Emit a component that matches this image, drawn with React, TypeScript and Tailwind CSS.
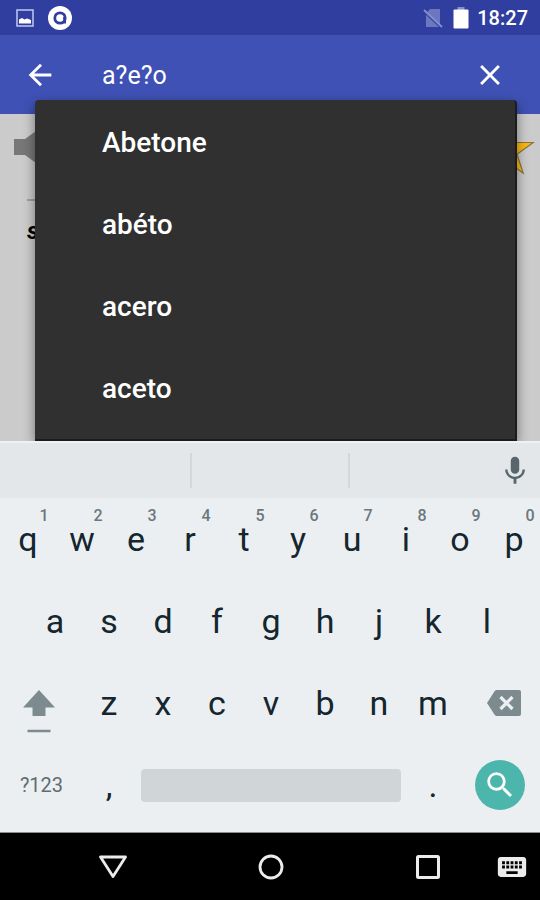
import { useState } from "react";
import type { ReactNode } from "react";
import { MdArrowBack, MdClose, MdKeyboard, MdMic, MdSearch } from "react-icons/md";

const WORDS = ["Abetone", "abéto", "acero", "aceto"];
const TOP_ROW = ["q", "w", "e", "r", "t", "y", "u", "i", "o", "p"];
const DIGITS = ["1", "2", "3", "4", "5", "6", "7", "8", "9", "0"];
const HOME_ROW = ["a", "s", "d", "f", "g", "h", "j", "k", "l"];
const BOTTOM_ROW = ["z", "x", "c", "v", "b", "n", "m"];

function StatusBar() {
  return (
    <div className="h-[35px] bg-[#303f9f] pl-4 pr-3 flex items-center text-white">
      <svg width="18" height="18" viewBox="0 0 18 18" aria-hidden="true">
        <rect x="1" y="1" width="16" height="16" fill="none" stroke="#b9c1ea" strokeWidth="1.6" />
        <path d="M3 14.500v-4l3-1.500 2.500 1.500 2.500-1 4 1.500v3.500z" fill="#fff" />
      </svg>
      <svg width="24" height="24" viewBox="0 0 24 24" className="ml-3.5" aria-hidden="true">
        <circle cx="12" cy="12" r="12" fill="#fff" />
        <circle cx="12" cy="12" r="5.200" fill="none" stroke="#303f9f" strokeWidth="2.800" />
        <path d="M16.600 11v6.500" stroke="#303f9f" strokeWidth="2.800" />
      </svg>
      <div className="flex-1" />
      <svg width="20" height="20" viewBox="0 0 20 20" aria-hidden="true">
        <path d="M7 1h10v18H3V5.500z" fill="#6b78c0" />
        <path d="M1 3.500l17 16" stroke="#303f9f" strokeWidth="2" />
        <path d="M1 2l18 17" stroke="#8490cc" strokeWidth="1.800" />
      </svg>
      <svg width="16" height="22" viewBox="0 0 16 22" className="ml-2.5" aria-hidden="true">
        <path d="M4.500 0h7v3h-7z" fill="#8490cc" />
        <rect x="0.500" y="2.500" width="15" height="19" rx="1" fill="#fff" />
      </svg>
      <time className="ml-2 text-[20px] leading-6 font-medium">18:27</time>
    </div>
  );
}

function Key({ label, digit }: { label: string; digit?: string }) {
  return (
    <button className="relative flex-1 h-full pl-0.5 flex items-center justify-center text-[34px] leading-10 text-[#14262e]">
      {label}
      {digit && (
        <span className="absolute top-2 right-1 w-3 text-center text-[16px] leading-5 font-medium text-[#6b777c]">{digit}</span>
      )}
    </button>
  );
}

function Row({ children, className = "" }: { children: ReactNode; className?: string }) {
  return <div className={`h-[82px] flex items-center ${className}`}>{children}</div>;
}

function Keyboard() {
  return (
    <div className="bg-[#eceff1]">
      <div className="h-[57px] bg-[#e4e7e9] border-t-2 border-[#eff1f2] flex items-center">
        <div className="w-[35.5%] h-[35px] border-r-2 border-[#d3d7d9]" />
        <div className="w-[29.3%] h-[35px] border-r-2 border-[#d3d7d9]" />
        <div className="flex-1 flex justify-end pr-2">
          <button aria-label="Voice input">
            <MdMic size={34} className="text-[#58666b]" />
          </button>
        </div>
      </div>
      <Row>
        {TOP_ROW.map((k, i) => (
          <Key key={k} label={k} digit={DIGITS[i]} />
        ))}
      </Row>
      <Row className="px-[5%]">
        {HOME_ROW.map((k) => (
          <Key key={k} label={k} />
        ))}
      </Row>
      <Row>
        <button aria-label="Shift" className="w-[15%] h-full pr-1 pt-4 flex items-center justify-center">
          <svg width="34" height="44" viewBox="0 0 34 44">
            <path d="M17 1l16 17.500H23.500V27h-13V18.500H1z" fill="#7d8b8f" />
            <path d="M5.500 42h23" stroke="#7d8b8f" strokeWidth="2.500" />
          </svg>
        </button>
        {BOTTOM_ROW.map((k) => (
          <Key key={k} label={k} />
        ))}
        <button aria-label="Backspace" className="w-[15%] h-full pl-2 flex items-center justify-center">
          <svg width="34" height="26" viewBox="0 0 34 26">
            <path d="M10 0h22q2 0 2 2v22q0 2-2 2H10q-1.500 0-2.400-1.300L0 13 7.600 1.300Q8.500 0 10 0z" fill="#7d8b8f" />
            <path d="M13.500 7l12 12M25.500 7l-12 12" stroke="#eceff1" strokeWidth="3.200" />
          </svg>
        </button>
      </Row>
      <Row>
        <button className="w-[15%] h-full pl-0.5 text-[20px] leading-6 text-[#5f6d72]">?123</button>
        <div className="w-[10%] h-full flex">
          <Key label="," />
        </div>
        <div className="flex-1 pl-1.5 pr-1">
          <button aria-label="Space" className="block w-full h-[33px] rounded bg-[#d0d5d8]" />
        </div>
        <div className="w-[10%] h-full flex">
          <Key label="." />
        </div>
        <div className="w-[15%] flex justify-center">
          <button aria-label="Search" className="size-[50px] rounded-full bg-[#4db6ac] text-white flex items-center justify-center">
            <MdSearch size={34} />
          </button>
        </div>
      </Row>
      <div className="h-[7px] border-b border-[#8a8d8e]" />
    </div>
  );
}

function NavBar() {
  return (
    <nav className="h-[67px] bg-black flex items-center text-[#ececec]">
      <div className="flex-1 ml-[81px] mr-6 flex justify-between">
        <button aria-label="Back" className="w-16 h-12 flex items-center justify-center">
          <svg width="30" height="26" viewBox="0 0 30 26" fill="none" stroke="currentColor" strokeWidth="2.800">
            <path d="M2.500 3h25L15 22.500z" strokeLinejoin="round" />
          </svg>
        </button>
        <button aria-label="Home" className="w-16 h-12 flex items-center justify-center">
          <svg width="26" height="26" viewBox="0 0 26 26" fill="none" stroke="currentColor" strokeWidth="2.800">
            <circle cx="13" cy="13" r="11" />
          </svg>
        </button>
        <button aria-label="Recent apps" className="w-16 h-12 flex items-center justify-center">
          <svg width="24" height="24" viewBox="0 0 24 24" fill="none" stroke="currentColor" strokeWidth="3">
            <rect x="1.500" y="1.500" width="21" height="21" rx="1" />
          </svg>
        </button>
      </div>
      <button aria-label="Switch keyboard" className="w-14 h-12 flex items-center justify-center">
        <MdKeyboard size={34} />
      </button>
    </nav>
  );
}

export default function App() {
  const [query, setQuery] = useState("a?e?o");

  return (
    <div className="min-h-screen flex flex-col font-[Roboto,sans-serif] select-none">
      <StatusBar />
      <header className="h-[79px] bg-[#3f51b5] px-[23px] flex items-center text-white">
        <button aria-label="Back">
          <MdArrowBack size={34} />
        </button>
        <input
          aria-label="Search words"
          value={query}
          onChange={(e) => setQuery(e.target.value)}
          className="flex-1 min-w-0 ml-[45px] pt-0.5 bg-transparent text-[25px] leading-8 outline-none"
        />
        <button aria-label="Clear" className="mr-[10px]">
          <MdClose size={34} />
        </button>
      </header>

      <main className="relative flex-1 flex flex-col bg-[#cbcbcb]">
        {/* entry page behind the suggestions */}
        <svg width="22" height="32" viewBox="0 0 22 32" className="absolute left-3.5 top-[17px]" aria-hidden="true">
          <path d="M0 8h11L22 0v32L11 24H0z" fill="#777" />
        </svg>
        <div className="absolute left-[27px] right-[27px] top-[85px] h-0.5 bg-[#97a3a3]" />
        <p className="absolute left-[27px] top-[103px] text-[24px] leading-7 font-bold italic text-black">s</p>
        <svg width="56" height="56" viewBox="0 0 56 56" className="absolute right-[5px] top-[9px]" aria-hidden="true">
          <path
            d="M28 0.500L34.200 19.500H54.200L38 31.200L44.200 50.200L28 38.500L11.800 50.200L18 31.200L1.800 19.500H21.800z"
            fill="#fbb90f"
            stroke="#8a7440"
            strokeWidth="1.200"
          />
        </svg>

        <ul className="relative flex-1 -mt-3.5 ml-[35px] mr-[23px] pt-0.5 pb-[9px] rounded-t-sm bg-[#303030] border-b-2 border-r-2 border-[#1c1c1c] shadow-[0_4px_12px_rgba(0,0,0,0.45)]">
          {WORDS.map((word) => (
            <li key={word}>
              <button
                onClick={() => setQuery(word)}
                className="w-full h-[82px] pl-[67px] text-left text-[28px] leading-8 font-medium text-white"
              >
                {word}
              </button>
            </li>
          ))}
        </ul>
      </main>

      <div className="relative">
        <Keyboard />
        <NavBar />
      </div>
    </div>
  );
}
